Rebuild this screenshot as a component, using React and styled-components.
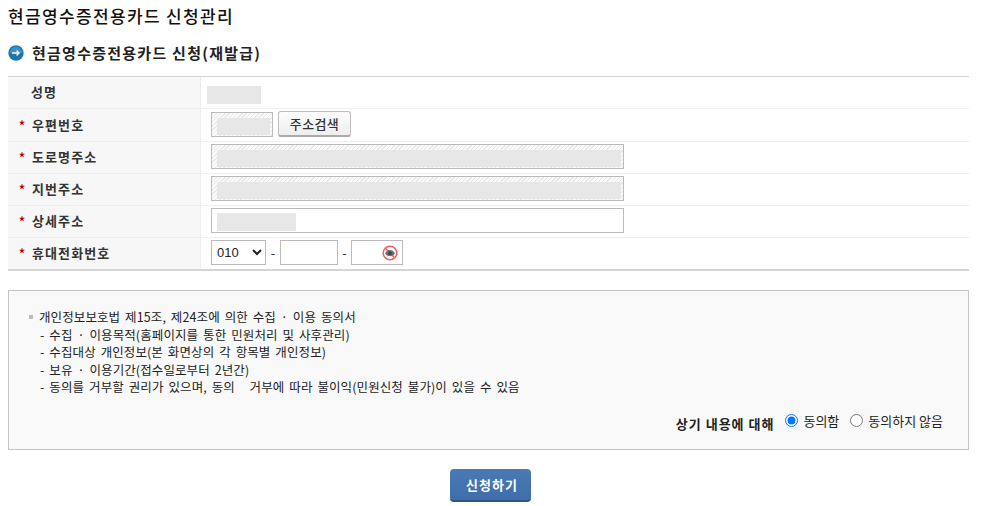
import React from 'react';
import styled, { createGlobalStyle } from 'styled-components';

const GlobalStyle = createGlobalStyle`
  html, body {
    margin: 0;
    padding: 0;
    background: #fff;
    font-family: "Noto Sans CJK KR", "Liberation Sans", sans-serif;
    color: #222;
  }
`;

const Page = styled.div`
  width: 985px;
  height: 506px;
  box-sizing: border-box;
  padding: 4px 16px 0 8px;
  overflow: hidden;
`;

const Title = styled.h1`
  margin: 0;
  height: 24px;
  line-height: 24px;
  font-size: 17px;
  font-weight: 500;
  letter-spacing: 1.35px;
  color: #111;
`;

const SectionHead = styled.div`
  display: flex;
  align-items: center;
  gap: 8px;
  margin-top: 13px;
  height: 24px;
`;

const SectionTitle = styled.h2`
  margin: 0 0 2px;
  font-size: 15px;
  font-weight: 700;
  letter-spacing: 1.25px;
  color: #222;
`;

const FormTable = styled.div`
  margin-top: 11px;
  border-top: 1px solid #d5d5d5;
  border-bottom: 2px solid #d5d5d5;
`;

const Row = styled.div`
  display: grid;
  grid-template-columns: 193px 1fr;
  height: ${p => p.$h || 31}px;
  border-top: ${p => (p.$first ? 'none' : '1px solid #eeeeee')};
`;

const Label = styled.div`
  display: flex;
  align-items: center;
  gap: 7px;
  padding-left: ${p => (p.$plain ? 23 : 11)}px;
  padding-bottom: 2px;
  background: #f7f7f7;
  border-right: 1px solid #eeeeee;
  font-size: 13px;
  font-weight: 700;
  letter-spacing: 1.1px;
  color: #333;
`;

const Star = styled.span`
  color: #c00000;
  font-size: 12px;
  font-weight: 700;
  width: 6px;
`;

const Cell = styled.div`
  display: flex;
  align-items: center;
  padding-left: ${p => p.$pad ?? 10}px;
  padding-bottom: 2px;
`;

const Redacted = styled.div`
  width: ${p => p.$w}px;
  height: ${p => p.$h || 18}px;
  margin-top: 6px;
  background: #e7e7e7;
`;

const Field = styled.div`
  box-sizing: border-box;
  position: relative;
  display: flex;
  width: ${p => p.$w}px;
  height: 25px;
  border: 1px solid #bbbbbb;
  padding: ${p => (p.$hatch ? '5px 2px 1px 5px' : '4px 5px 1px')};
  background: ${p =>
    p.$hatch
      ? 'repeating-linear-gradient(135deg, #e9e9e9 0 1px, #fafafa 1px 3px)'
      : '#fff'};
`;

const FillBlock = styled.div`
  flex: ${p => (p.$w ? `0 0 ${p.$w}px` : 1)};
  background: #e7e7e7;
`;

const SearchButton = styled.button`
  box-sizing: border-box;
  width: 73px;
  height: 26px;
  margin-left: 5px;
  padding: 0;
  border: 1px solid #bdbdbd;
  border-bottom: 2px solid #aaaaaa;
  border-radius: 3px;
  background: linear-gradient(#fdfdfd, #eeeeee);
  font-family: inherit;
  font-size: 13px;
  font-weight: 500;
  letter-spacing: 0.4px;
  color: #333;
`;

const PhoneSelect = styled.select`
  box-sizing: border-box;
  width: 55px;
  height: 25px;
  padding: 0 0 0 1px;
  border: 1px solid #bbbbbb;
  border-radius: 0;
  background: #fff;
  font-family: "Liberation Sans", sans-serif;
  font-size: 13px;
  color: #222;
`;

const Dash = styled.span`
  width: ${p => p.$w}px;
  text-align: center;
  font-size: 13px;
  color: #333;
`;

const EyeSlot = styled.span`
  position: absolute;
  right: 4px;
  top: 4px;
  display: flex;
`;

const ConsentBox = styled.div`
  box-sizing: border-box;
  height: 160px;
  margin-top: 19px;
  padding: 17px 20px 0 20px;
  border: 1px solid #c4c4c4;
  background: #f9f9f9;
`;

const ConsentLine = styled.div`
  height: 17.6px;
  line-height: 17.6px;
  padding-left: ${p => (p.$head ? 0 : 11)}px;
  font-size: 12.5px;
  letter-spacing: 0.1px;
  word-spacing: 2px;
  color: #222;
  white-space: pre;
  display: flex;
  align-items: center;
`;

const Bullet = styled.i`
  width: 4px;
  height: 4px;
  margin: 0 6px 0 0;
  background: #bbbbbb;
`;

const AgreeRow = styled.div`
  display: flex;
  justify-content: flex-end;
  align-items: center;
  margin-top: 13px;
  padding-right: 5px;
`;

const AgreeLabel = styled.strong`
  margin-right: 11px;
  margin-top: 5px;
  font-size: 13px;
  font-weight: 700;
  letter-spacing: 1px;
  color: #222;
`;

const RadioLabel = styled.label`
  display: flex;
  align-items: center;
  gap: 5px;
  margin-left: ${p => (p.$second ? 11 : 0)}px;
  font-size: 13px;
  color: #222;
`;

const Radio = styled.input`
  width: 13px;
  height: 13px;
  margin: 0;
`;

const Actions = styled.div`
  display: flex;
  justify-content: center;
  margin-top: 19px;
  padding-left: 4px;
`;

const SubmitButton = styled.button`
  box-sizing: border-box;
  width: 81px;
  height: 33px;
  padding: 0 0 0 3px;
  border: none;
  border-bottom: 2px solid #2f5485;
  border-radius: 4px;
  background: linear-gradient(#4a7ab5, #3f6fab);
  font-family: inherit;
  font-size: 13px;
  font-weight: 700;
  letter-spacing: 1.1px;
  color: #fff;
`;

const ArrowIcon = () => (
  <svg width="16" height="16" viewBox="0 0 16 16">
    <circle cx="8" cy="8" r="7.7" fill="#1f74ad" />
    <path d="M1.5 8a6.5 6.5 0 0 1 13 0z" fill="#3b8fc4" />
    <path d="M4 8h7M8.6 5.6 11 8l-2.4 2.4" fill="none" stroke="#fff" strokeWidth="1.4" />
  </svg>
);

const HiddenEyeIcon = () => (
  <svg width="16" height="16" viewBox="0 0 16 16">
    <circle cx="8" cy="8" r="6.8" fill="#fff" stroke="#f0605c" strokeWidth="1.6" />
    <path d="M3.300 3.300 12.700 12.700" stroke="#f0605c" strokeWidth="1.5" />
    <path d="M3 8.500C4.500 5.800 6 5 8 5s3.500 .8 5 3.500c-1.500 2-3 2.700-5 2.700S4.500 10.500 3 8.500z" fill="#6a6f76" />
    <circle cx="8" cy="8.200" r="1.900" fill="#3f4349" />
  </svg>
);

const consentItems = [
  '- 수집 · 이용목적(홈페이지를 통한 민원처리 및 사후관리)',
  '- 수집대상 개인정보(본 화면상의 각 항목별 개인정보)',
  '- 보유 · 이용기간(접수일로부터 2년간)',
  '- 동의를 거부할 권리가 있으며, 동의   거부에 따라 불이익(민원신청 불가)이 있을 수 있음',
];

const App = () => (
  <Page>
    <GlobalStyle />
    <Title>현금영수증전용카드 신청관리</Title>
    <SectionHead>
      <ArrowIcon />
      <SectionTitle>현금영수증전용카드 신청(재발급)</SectionTitle>
    </SectionHead>

    <FormTable>
      <Row $first>
        <Label $plain>성명</Label>
        <Cell $pad={6}>
          <Redacted $w={54} />
        </Cell>
      </Row>
      <Row $h={32}>
        <Label><Star>*</Star>우편번호</Label>
        <Cell>
          <Field $hatch $w={62}><FillBlock /></Field>
          <SearchButton>주소검색</SearchButton>
        </Cell>
      </Row>
      <Row>
        <Label><Star>*</Star>도로명주소</Label>
        <Cell>
          <Field $hatch $w={413}><FillBlock /></Field>
        </Cell>
      </Row>
      <Row>
        <Label><Star>*</Star>지번주소</Label>
        <Cell>
          <Field $hatch $w={413}><FillBlock /></Field>
        </Cell>
      </Row>
      <Row>
        <Label><Star>*</Star>상세주소</Label>
        <Cell>
          <Field $w={413}><FillBlock $w={79} /></Field>
        </Cell>
      </Row>
      <Row>
        <Label><Star>*</Star>휴대전화번호</Label>
        <Cell>
          <PhoneSelect defaultValue="010">
            <option value="010">010</option>
            <option value="011">011</option>
          </PhoneSelect>
          <Dash $w={14}>-</Dash>
          <Field $w={58} />
          <Dash $w={13}>-</Dash>
          <Field $w={52}>
            <EyeSlot><HiddenEyeIcon /></EyeSlot>
          </Field>
        </Cell>
      </Row>
    </FormTable>

    <ConsentBox>
      <ConsentLine $head>
        <Bullet />개인정보보호법 제15조, 제24조에 의한 수집 · 이용 동의서
      </ConsentLine>
      {consentItems.map(item => (
        <ConsentLine key={item}>{item}</ConsentLine>
      ))}
      <AgreeRow>
        <AgreeLabel>상기 내용에 대해</AgreeLabel>
        <RadioLabel>
          <Radio type="radio" name="agree" defaultChecked />동의함
        </RadioLabel>
        <RadioLabel $second>
          <Radio type="radio" name="agree" />동의하지 않음
        </RadioLabel>
      </AgreeRow>
    </ConsentBox>

    <Actions>
      <SubmitButton>신청하기</SubmitButton>
    </Actions>
  </Page>
);

export default App;
